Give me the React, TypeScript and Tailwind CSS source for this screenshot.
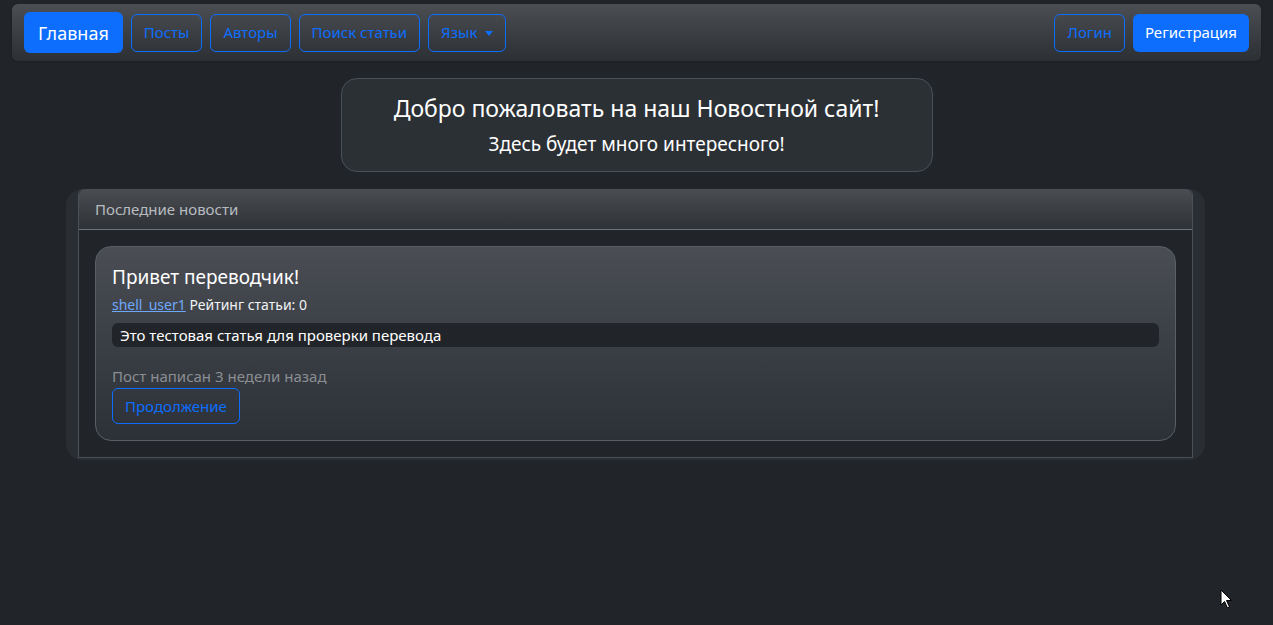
import React from 'react';

const font = { fontFamily: '"Noto Sans", "Open Sans", "Liberation Sans", sans-serif' };

function NavButton({ children, caret }: { children: React.ReactNode; caret?: boolean }) {
  return (
    <button className="h-[38px] px-3 border border-[#0d6efd] text-[#0d6efd] rounded-md text-[15px] flex items-center gap-2">
      {children}
      {caret && <span className="inline-block w-0 h-0 border-x-[4px] border-x-transparent border-t-[5px] border-t-[#0d6efd] mt-0.5" />}
    </button>
  );
}

export default function App() {
  return (
    <div className="relative min-h-screen bg-[#212529] text-[#dee2e6] pt-1" style={font}>
      {/* Navbar */}
      <nav className="mx-3 h-[57px] rounded-md bg-gradient-to-b from-[#4b4e53] to-[#2c3035] px-3 flex items-center justify-between shadow-sm">
        <div className="flex items-center gap-2">
          <button className="h-[41px] px-[14px] bg-[#0d6efd] text-white rounded-md text-lg">Главная</button>
          <NavButton>Посты</NavButton>
          <NavButton>Авторы</NavButton>
          <NavButton>Поиск статьи</NavButton>
          <NavButton caret>Язык</NavButton>
        </div>
        <div className="flex items-center gap-2">
          <NavButton>Логин</NavButton>
          <button className="h-[38px] px-3 bg-[#0d6efd] text-white rounded-md text-[15px]">Регистрация</button>
        </div>
      </nav>

      {/* Welcome */}
      <div className="mx-auto mt-[17px] w-[592px] h-[94px] rounded-2xl border border-[#495057] bg-[#2b3035] flex flex-col items-center justify-center">
        <h1 className="text-[23px] leading-8 text-white">Добро пожаловать на наш Новостной сайт!</h1>
        <p className="text-[19px] leading-7 text-white mt-1.5">Здесь будет много интересного!</p>
      </div>

      {/* News */}
      <div className="ml-[66px] mt-[17px] w-[1139px] rounded-2xl bg-[#2a2e33] px-3 pb-0.5">
        <div className="rounded-t-md border border-[#495057] border-t-0 bg-[#212529]">
          <div className="h-[41px] px-4 flex items-center rounded-t-md bg-gradient-to-b from-[#4a4d52] to-[#2e3136] border-b border-[#6c757d] text-[15px] text-[#b8bcc0]">
            Последние новости
          </div>
          <div className="p-4">
            <div className="rounded-2xl border border-[#5a5f66] bg-gradient-to-b from-[#4a4e54] to-[#2c3037] p-4">
              <h2 className="text-[19px] leading-7 text-white">Привет переводчик!</h2>
              <div className="text-sm font-normal leading-6 mt-0.5 text-[#f1f3f5]">
                <a href="#" className="text-[#6ea8fe] underline">shell_user1</a> Рейтинг статьи: 0
              </div>
              <div className="mt-1.5 h-6 rounded-md bg-[#212529] px-2 text-[15px] leading-6 text-white">
                Это тестовая статья для проверки перевода
              </div>
              <div className="mt-[17px] text-[15px] leading-6 text-[#8a8e92]">Пост написан 3 недели назад</div>
              <button className="h-9 px-3 border border-[#0d6efd] text-[#0d6efd] rounded-md text-[15px]">Продолжение</button>
            </div>
          </div>
        </div>
      </div>

      {/* mouse cursor */}
      <svg className="absolute left-[1220px] top-[589px]" width="13" height="20" viewBox="0 0 13 20">
        <path d="M1 1 L1 16 L4.5 12.5 L7.5 19 L9.5 18 L6.5 11.5 L11.5 11.5 Z" fill="#fff" stroke="#000" strokeWidth="1" />
      </svg>
    </div>
  );
}
